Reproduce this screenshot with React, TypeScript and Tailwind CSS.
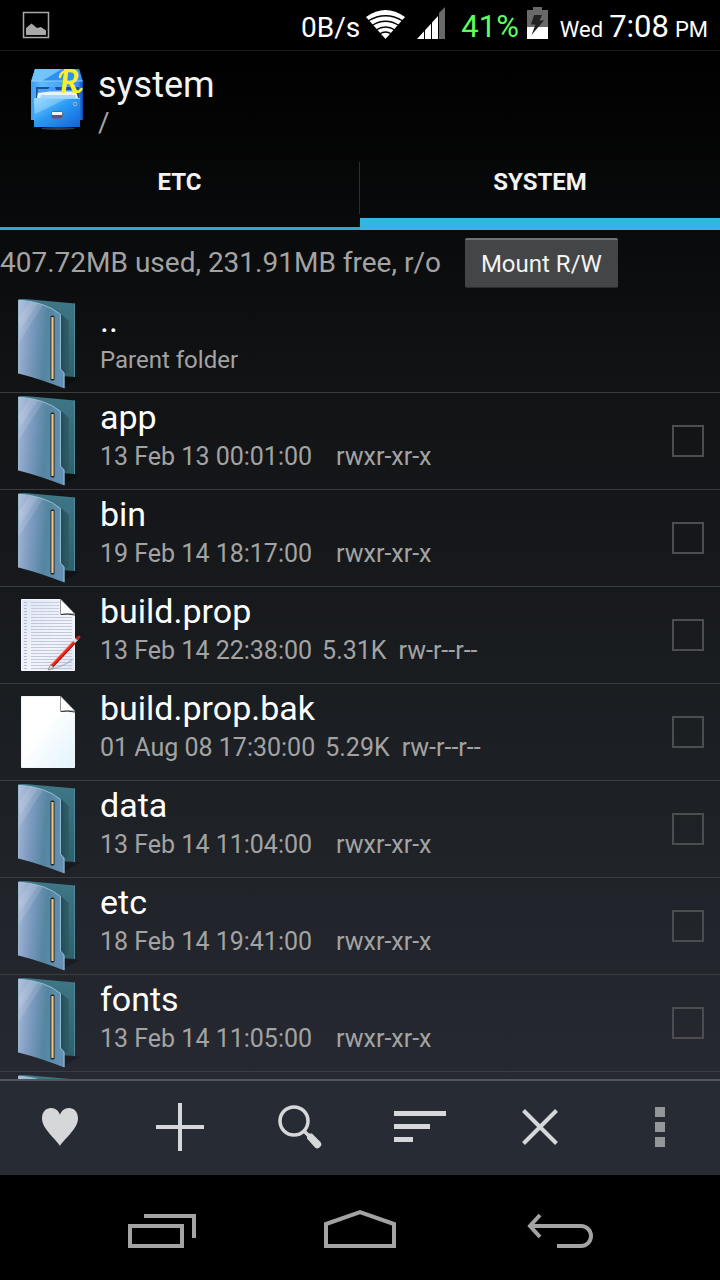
import { ReactNode, useState } from 'react';
import clsx from 'clsx';

type IconKind = 'folder' | 'edit' | 'file';

interface Entry {
  name: string;
  date: string;
  size?: string;
  perms: string;
  icon: IconKind;
}

const ENTRIES: Entry[] = [
  { name: 'app', date: '13 Feb 13 00:01:00', perms: 'rwxr-xr-x', icon: 'folder' },
  { name: 'bin', date: '19 Feb 14 18:17:00', perms: 'rwxr-xr-x', icon: 'folder' },
  { name: 'build.prop', date: '13 Feb 14 22:38:00', size: '5.31K', perms: 'rw-r--r--', icon: 'edit' },
  { name: 'build.prop.bak', date: '01 Aug 08 17:30:00', size: '5.29K', perms: 'rw-r--r--', icon: 'file' },
  { name: 'data', date: '13 Feb 14 11:04:00', perms: 'rwxr-xr-x', icon: 'folder' },
  { name: 'etc', date: '18 Feb 14 19:41:00', perms: 'rwxr-xr-x', icon: 'folder' },
  { name: 'fonts', date: '13 Feb 14 11:05:00', perms: 'rwxr-xr-x', icon: 'folder' },
];

// Shared gradients, referenced by id from the row icons
function IconDefs() {
  return (
    <svg width="0" height="0" className="absolute" aria-hidden="true">
      <defs>
        <linearGradient id="folder-front" x1="0" y1="0" x2="1" y2="0.15">
          <stop offset="0" stopColor="#a9b8d8" />
          <stop offset="0.3" stopColor="#7f9cc2" />
          <stop offset="0.65" stopColor="#54859f" />
          <stop offset="1" stopColor="#6590b4" />
        </linearGradient>
        <linearGradient id="folder-back" x1="0" y1="0" x2="0" y2="1">
          <stop offset="0" stopColor="#3f7787" />
          <stop offset="1" stopColor="#2f606b" />
        </linearGradient>
        <linearGradient id="folder-inner" x1="0" y1="0" x2="1" y2="0">
          <stop offset="0" stopColor="#224a52" stopOpacity="0.9" />
          <stop offset="1" stopColor="#2a5963" stopOpacity="0.7" />
        </linearGradient>
        <linearGradient id="paper" x1="0" y1="0" x2="1" y2="1">
          <stop offset="0.4" stopColor="#ffffff" />
          <stop offset="1" stopColor="#e2f3fe" />
        </linearGradient>
        <linearGradient id="paper-lined" x1="0" y1="0" x2="1" y2="1">
          <stop offset="0" stopColor="#dfe6f7" />
          <stop offset="0.6" stopColor="#f2f5fc" />
          <stop offset="1" stopColor="#dbe6f8" />
        </linearGradient>
      </defs>
    </svg>
  );
}

function FolderIcon() {
  return (
    <svg viewBox="0 0 100 96" className="h-24 w-25 shrink-0" aria-hidden="true">
      <path d="M64 81 L80 82 L65 90 Z" fill="#000" opacity="0.25" />
      <path d="M18 4 Q20 2.5 28 3.2 L75 7.5 V81 L62 80 Z" fill="url(#folder-back)" />
      <path d="M61 18 L69 25 V76 L64.5 80 L61 73 Z" fill="url(#folder-inner)" />
      <path d="M74.5 7.5 V81" stroke="#4f8a9a" strokeWidth="1" />
      <path d="M18.5 4 Q46 6 60.5 18.5 V73 L64.5 77 V92.5 Q40 83 18.5 77.5 Z" fill="url(#folder-front)" />
      <path d="M18.5 4 Q32 5.5 43 9 L18.5 47 Z" fill="#fff" opacity="0.12" />
      <path d="M30 5.5 L38 7.5 L20 34 L18.5 22 Z" fill="#fff" opacity="0.12" />
      <path d="M18.5 77.5 V4 Q46 6 60.5 18.5 V73 L64 77 V92" fill="none" stroke="#a5cbe2" strokeWidth="0.8" />
      <rect x="50.5" y="19.5" width="4" height="65" rx="1.5" fill="#1e2425" />
      <rect x="51.4" y="21" width="2.2" height="62" fill="#f3c581" />
    </svg>
  );
}

function FileIcon({ lined = false }: { lined?: boolean }) {
  return (
    <svg viewBox="0 0 100 96" className="h-24 w-25 shrink-0" aria-hidden="true">
      <path
        d="M21.5 12.5 H60.5 L74.5 27 V83.5 H21.5 Z"
        fill={lined ? 'url(#paper-lined)' : 'url(#paper)'}
        stroke={lined ? '#f4f7ff' : '#eef6f8'}
      />
      {lined && (
        <>
          <path d="M25.5 15 V82" stroke="#b5bbca" strokeWidth="3" strokeDasharray="1 2" />
          <path d="M45 15 V30" stroke="#c9cedc" strokeWidth="28" strokeDasharray="1 2" />
          <path d="M51.5 30 V82" stroke="#c2c8d8" strokeWidth="41" strokeDasharray="1 2" />
          <path d="M49 83 Q65 79 73 72" fill="none" stroke="#8d92a0" strokeWidth="1.5" opacity="0.5" />
        </>
      )}
      <path d="M60.5 12 L75 27 Q66 26 60.5 27.5 Z" fill="#fff" stroke="#777" strokeWidth="0.8" />
      <path d="M61 27.5 Q67 26.5 75 28" fill="none" stroke="#333" strokeWidth="1" />
      {lined && (
        <>
          <path d="M48 83 L50.5 77.5 L53.5 80.5 Z" fill="#eadfcf" stroke="#666" strokeWidth="0.6" />
          <path d="M52.5 79 L75 55" stroke="#a3130c" strokeWidth="3" />
          <path d="M51.8 78.5 L74.5 54.5" stroke="#f3291b" strokeWidth="2.4" />
          <path d="M51.5 77 L73 54" stroke="#ff9c90" strokeWidth="0.8" />
          <path d="M74 55 L77.5 51.5" stroke="#d9dde0" strokeWidth="3" />
          <path d="M77.5 51.5 L79 50" stroke="#c8201c" strokeWidth="3" strokeLinecap="round" />
        </>
      )}
    </svg>
  );
}

function RowIcon({ kind }: { kind: IconKind }) {
  if (kind === 'folder') return <FolderIcon />;
  return <FileIcon lined={kind === 'edit'} />;
}

function AppLogo() {
  return (
    <svg width="56" height="64" viewBox="0 0 56 64" className="overflow-visible" aria-hidden="true">
      <defs>
        <linearGradient id="cab-front" x1="0" y1="0" x2="1" y2="1">
          <stop offset="0" stopColor="#8fd4ff" />
          <stop offset="0.45" stopColor="#2a9bf5" />
          <stop offset="1" stopColor="#1262d8" />
        </linearGradient>
        <linearGradient id="cab-body" x1="0" y1="0" x2="1" y2="0">
          <stop offset="0" stopColor="#3b9df4" />
          <stop offset="0.2" stopColor="#5bbcff" />
          <stop offset="0.9" stopColor="#3a8df0" />
          <stop offset="1" stopColor="#0d48b4" />
        </linearGradient>
      </defs>
      <ellipse cx="28" cy="61.5" rx="17" ry="1.5" fill="#34374a" />
      <path d="M5 2 H49 L53 14 V53 H1 V14 Z" fill="url(#cab-body)" />
      <path d="M5 2 H49 L52.5 14 H1.5 Z" fill="#318fee" />
      <path d="M5 2 H32 L12 14 H1.5 Z" fill="#8fd8ff" opacity="0.7" />
      <path d="M1.5 14 H52.5" stroke="#8ad0ff" strokeWidth="1" />
      <rect x="6" y="20" width="43" height="11" fill="#1d4f94" />
      <path d="M7 31 L8 22 H18 L20 20 H25 L26 23 H46 L48 31 Z" fill="#4a9ff0" />
      <path d="M7 31 L8 26 L20 24.5 H46 L48 31 Z" fill="#e7f4ff" />
      <path d="M10 31 L11 28 H45 L46 31 Z" fill="#a9d5fb" />
      <path d="M4 31 H50 V60 H4 Z" fill="url(#cab-front)" />
      <path d="M4 31 H38 L5 47 Z" fill="#bfeaff" opacity="0.35" />
      <path d="M4 31.5 H50" stroke="#8fd6ff" />
      <circle cx="45" cy="37" r="1.8" fill="#6a7fa8" stroke="#bcd4f5" strokeWidth="0.6" />
      <rect x="21.5" y="44.5" width="11" height="7" rx="1" fill="#f2f2f5" stroke="#5a6a90" />
      <rect x="22" y="48" width="10" height="3" fill="#5a5585" />
      <text x="30" y="26" fontFamily="Lato, sans-serif" fontSize="32" fontStyle="italic" fontWeight="700" fill="#f7ee2c">R</text>
      <path d="M30 10 Q31 4 38 3.5" fill="none" stroke="#f7ee2c" strokeWidth="2.5" strokeLinecap="round" />
      <path d="M46 24 Q49 26 51.5 22" fill="none" stroke="#f7ee2c" strokeWidth="2.5" strokeLinecap="round" />
    </svg>
  );
}

function StatusBar() {
  return (
    <div className="flex h-[51px] shrink-0 items-center border-b border-[#1a1a1a] bg-black pr-3 pl-[22px] text-white">
      <svg width="28" height="28" viewBox="0 0 28 28" aria-hidden="true">
        <rect x="1.5" y="1.5" width="25" height="25" fill="none" stroke="#a8a8a8" strokeWidth="1.5" />
        <path d="M4 24 V17 L9.5 12.5 L15 17 L19 16 L24 19.5 V24 Z" fill="#a8a8a8" />
      </svg>
      <div className="ml-auto flex items-baseline pt-1">
        <span className="text-[28px] leading-10">0B/s</span>
        <svg width="39" height="32" viewBox="0 -3 39 32" className="ml-1.5 self-start" aria-label="Wi-Fi">
          <path d="M0 7 Q19.5 -7 39 7 L19.5 29 Z" fill="#fff" />
          <path
            d="M2 11 Q19.5 0.5 37 11 M6 15.5 Q19.5 7 33 15.5 M10 20 Q19.5 14 29 20 M13.5 24 Q19.5 20 25.5 24"
            fill="none"
            stroke="#000"
            strokeWidth="1.3"
          />
        </svg>
        <svg width="28" height="32" viewBox="0 0 28 32" className="ml-3 self-start" aria-label="Signal">
          <path d="M22 6 L28 0 V32 H22 Z" fill="#696969" />
          <path d="M0 32 L21 9 V32 Z" fill="#fff" />
          <path d="M7.5 20 V32 M14.5 12 V32 M21.5 5 V32" stroke="#000" strokeWidth="1" />
        </svg>
        <span className="ml-4 text-[31px] leading-10 text-[#5cff5c]">41%</span>
        <svg width="21" height="32" viewBox="0 0 21 32" className="ml-2 self-start" aria-label="Battery charging">
          <path d="M6 0 H15 V3 H21 V20 H0 V3 H6 Z" fill="#696969" />
          <path d="M0 20 H21 V32 H0 Z" fill="#fff" />
          <path d="M7 8 H15 L12.5 13.5 H17 L4.5 28 L8.5 17.5 H4 Z" fill="#222" />
        </svg>
        <span className="ml-3 text-[22px]">Wed</span>
        <span className="ml-1.5 text-[31px] leading-10">7:08</span>
        <span className="ml-1.5 text-[22px]">PM</span>
      </div>
    </div>
  );
}

interface RowProps {
  icon: ReactNode;
  title: string;
  children: ReactNode;
  selectable?: boolean;
}

function Row({ icon, title, children, selectable = true }: RowProps) {
  return (
    <li className="flex shrink-0 items-center border-b border-[#3a3d40] pr-4">
      {icon}
      <div className="min-w-0 flex-1 pb-2">
        <div className="truncate text-[34px] leading-10 text-white">{title}</div>
        <div className="text-2xl leading-10 text-[#a3a3a3]">{children}</div>
      </div>
      {selectable && (
        <input
          type="checkbox"
          aria-label={`Select ${title}`}
          className="size-8 shrink-0 appearance-none border-2 border-[#4c4d4f] checked:bg-[#33b5e5]"
        />
      )}
    </li>
  );
}

function ToolButton({ label, children }: { label: string; children: ReactNode }) {
  return (
    <button type="button" aria-label={label} className="flex flex-1 items-center justify-center text-[#d6d7d9]">
      {children}
    </button>
  );
}

export default function App() {
  const [tab, setTab] = useState('SYSTEM');

  return (
    <div className="flex h-screen flex-col overflow-hidden bg-black font-[Roboto,sans-serif]">
      <IconDefs />
      <StatusBar />

      <div className="flex min-h-0 flex-1 flex-col bg-[linear-gradient(to_bottom,#000000,#111315_30%,#1b1e22_60%,#292c35)]">
        <header className="flex shrink-0 items-start gap-3 pt-4 pl-[30px]">
          <AppLogo />
          <div className="text-[#f3f3f3]">
            <h1 className="text-4xl leading-9">system</h1>
            <p className="text-[28px] leading-10 text-[#a3a3a3]">/</p>
          </div>
        </header>

        <div role="tablist" className="flex h-[87px] shrink-0">
          {['ETC', 'SYSTEM'].map((name, i) => (
            <button
              key={name}
              type="button"
              role="tab"
              aria-selected={tab === name}
              onClick={() => setTab(name)}
              className={clsx(
                'flex flex-1 flex-col text-2xl font-bold text-[#f3f3f3]',
                tab === name ? 'border-b-12 border-[#33b5e5]' : 'border-b-3 border-[#33a5d2]',
              )}
            >
              <span className={clsx('mt-[19px] flex h-[52px] w-full justify-center pt-1', i === 0 && 'border-r border-[#2c2d2f]')}>
                {name}
              </span>
            </button>
          ))}
        </div>

        <div className="flex h-[66px] shrink-0 items-center gap-6">
          <span className="text-[28px] text-[#a3a3a3]">407.72MB used, 231.91MB free, r/o</span>
          <button
            type="button"
            className="h-[50px] rounded-xs border-t-2 border-b border-t-[#707172] border-b-[#2c2d2e] bg-[#444546] px-4 text-2xl text-[#f3f3f3]"
          >
            Mount R/W
          </button>
        </div>

        <ul className="flex min-h-0 flex-1 flex-col overflow-hidden">
          <Row icon={<FolderIcon />} title=".." selectable={false}>
            Parent folder
          </Row>
          {ENTRIES.map((entry) => (
            <Row key={entry.name} icon={<RowIcon kind={entry.icon} />} title={entry.name}>
              <div className="flex text-[25px]">
                <span>{entry.date}</span>
                {entry.size && <span className="ml-2.5">{entry.size}</span>}
                <span className={entry.size ? 'ml-3' : 'ml-6'}>{entry.perms}</span>
              </div>
            </Row>
          ))}
          <li className="shrink-0">
            <FolderIcon />
          </li>
        </ul>

        <div className="flex h-24 shrink-0 border-t-2 border-[#53565a] bg-[#272b33] pb-0.5">
          <ToolButton label="Bookmarks">
            <svg width="36" height="40" viewBox="0 0 36 40" fill="currentColor">
              <path d="M18 39 C15 33 0 22 0 11.5 C0 5 4 1 9 1 C13.5 1 17 4 18 8 C19 4 22.5 1 27 1 C32 1 36 5 36 11.5 C36 22 21 33 18 39 Z" />
            </svg>
          </ToolButton>
          <ToolButton label="New">
            <svg width="48" height="48" viewBox="0 0 48 48" stroke="currentColor" strokeWidth="4">
              <path d="M24 0 V48 M0 24 H48" />
            </svg>
          </ToolButton>
          <ToolButton label="Search">
            <svg width="44" height="44" viewBox="0 0 44 44" fill="none" stroke="currentColor">
              <circle cx="16" cy="16" r="14" strokeWidth="3.5" />
              <path d="M26 26 L31 31" strokeWidth="3.5" />
              <path d="M29 33.500 V30 L30.500 28.500 H34 L42.500 37 Q44.500 40 42 42 Q40 44.500 37 42.500 Z" fill="currentColor" stroke="none" />
            </svg>
          </ToolButton>
          <ToolButton label="Sort">
            <svg width="52" height="32" viewBox="0 0 52 32" fill="currentColor">
              <path d="M0 0 H52 V5 H0 Z M0 13 H36 V18 H0 Z M0 26 H19 V31 H0 Z" />
            </svg>
          </ToolButton>
          <ToolButton label="Close">
            <svg width="36" height="36" viewBox="0 0 36 36" stroke="currentColor" strokeWidth="4">
              <path d="M1.5 1.5 L34.5 34.5 M34.5 1.5 L1.5 34.5" />
            </svg>
          </ToolButton>
          <ToolButton label="More options">
            <svg width="10" height="40" viewBox="0 0 10 40" fill="#94979a">
              <path d="M0 0 H10 V10 H0 Z M0 15 H10 V25 H0 Z M0 30 H10 V40 H0 Z" />
            </svg>
          </ToolButton>
        </div>
      </div>

      <nav className="flex h-[105px] shrink-0 items-center justify-between bg-black px-[126px] text-[#a3a3a3]">
        <button type="button" aria-label="Recent apps">
          <svg width="72" height="40" viewBox="0 0 72 40" fill="none" stroke="currentColor" strokeWidth="4">
            <path d="M4 18 H56 V38 H4 Z M18 8 H68 V30" />
          </svg>
        </button>
        <button type="button" aria-label="Home">
          <svg width="72" height="40" viewBox="0 0 72 40" fill="none" stroke="currentColor" strokeWidth="4">
            <path d="M2 38 V16 L36 4 L70 16 V38 Z" />
          </svg>
        </button>
        <button type="button" aria-label="Back">
          <svg width="72" height="40" viewBox="0 0 72 40" fill="none" stroke="currentColor" strokeWidth="4">
            <path d="M18 7 L8 18 L18 29" />
            <path d="M8 18 H59 A10 10 0 0 1 59 38 H35" />
          </svg>
        </button>
      </nav>
    </div>
  );
}
